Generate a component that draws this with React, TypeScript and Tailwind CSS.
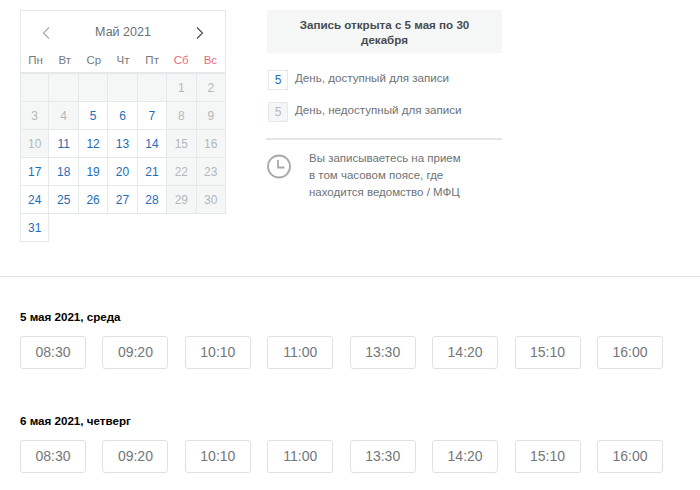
const headers = ["Пн", "Вт", "Ср", "Чт", "Пт", "Сб", "Вс"];
const times = ["08:30", "09:20", "10:10", "11:00", "13:30", "14:20", "15:10", "16:00"];
const days: (number | null)[] = [null, null, null, null, null, 1, 2];
for (let i = 3; i <= 31; i++) days.push(i);
const available = (d: number) => d >= 5 && ![8, 9, 10, 15, 16, 22, 23, 29, 30].includes(d);

function Cell({ d }: { d: number | null }) {
  const on = d !== null && available(d);
  return (
    <div
      className={`h-[28px] flex items-center justify-center border-r border-b border-[#e4e9ec] text-[12px] ${
        on ? "bg-white text-[#1f6cb8]" : "bg-[#f5f7f7] text-[#b3b8ba]"
      }`}
    >
      {d}
    </div>
  );
}

function Slots({ title }: { title: string }) {
  return (
    <section>
      <h2 className="text-[11.6px] leading-[16px] font-bold text-black">{title}</h2>
      <div className="mt-[11px] flex justify-between w-[643px]">
        {times.map((t) => (
          <div
            key={t}
            className="w-[66px] h-[33px] flex items-center justify-center rounded-[3px] border border-[#dfe1e2] bg-white text-[14px] text-[#73777a]"
          >
            {t}
          </div>
        ))}
      </div>
    </section>
  );
}

export default function App() {
  return (
    <div className="w-[700px] h-[490px] overflow-hidden bg-white font-['Liberation_Sans',Arial,sans-serif]">
      <div className="flex pt-[10px] pl-[20px]">
        <div className="w-[206px]">
          <div className="h-[64px] border border-[#e4e9ec] border-b-2 box-border">
            <div className="h-[41px] flex items-center justify-between pl-[20px] pr-[20px] pt-[2px]">
              <svg width="10" height="14" viewBox="0 0 10 14" fill="none" stroke="#a3a8ac" strokeWidth="1.1">
                <path d="M8 1.5 2.5 7 8 12.5" />
              </svg>
              <span className="text-[12.5px] text-[#6a6f73]">Май 2021</span>
              <svg width="10" height="14" viewBox="0 0 10 14" fill="none" stroke="#45494c" strokeWidth="1.1">
                <path d="M2 1.5 7.5 7 2 12.5" />
              </svg>
            </div>
            <div className="grid grid-cols-7 text-[11.5px] leading-[16px] text-center text-[#75797d]">
              {headers.map((h, i) => (
                <span key={h} className={i > 4 ? "text-[#ee6b7d]" : ""}>
                  {h}
                </span>
              ))}
            </div>
          </div>
          <div className="grid grid-cols-7 w-[206px]">
            {days.map((d, i) => (
              <div key={i} className={i % 7 === 0 ? "border-l border-[#e4e9ec]" : ""}>
                <Cell d={d} />
              </div>
            ))}
          </div>
        </div>
        <div className="ml-[41px] w-[235px]">
          <div className="h-[43px] bg-[#f5f7f7] flex items-center justify-center text-center px-[20px] text-[11.6px] leading-[15px] font-bold text-[#484c4f]">
            Запись открыта с 5 мая по 30 декабря
          </div>
          <div className="mt-[17px] flex items-start">
            <div className="ml-[1px] w-[20px] h-[20px] flex items-center justify-center border border-[#e4e9ec] text-[12px] text-[#1f6cb8]">
              5
            </div>
            <span className="ml-[7px] text-[11.6px] leading-[16px] text-[#6e7276]">День, доступный для записи</span>
          </div>
          <div className="mt-[12px] flex items-start">
            <div className="ml-[1px] w-[20px] h-[20px] flex items-center justify-center border border-[#e4e9ec] bg-[#f5f7f7] text-[12px] text-[#b3b8ba]">
              5
            </div>
            <span className="ml-[7px] text-[11.6px] leading-[16px] text-[#6e7276]">День, недоступный для записи</span>
          </div>
          <div className="mt-[16px] border-t-2 border-[#e4e7e8] -ml-[1px]" />
          <div className="mt-[6px] flex">
            <svg className="mt-[8px] shrink-0" width="24" height="25" viewBox="0 0 24 25" fill="none" stroke="#a6aaac" strokeWidth="1.8">
              <circle cx="12" cy="12.5" r="11" />
              <path d="M11 6v7.5h6.5" />
            </svg>
            <p className="ml-[18px] mt-[4px] text-[11.5px] leading-[17px] text-[#6e7276]">
              Вы записываетесь на прием
              <br />в том часовом поясе, где
              <br />находится ведомство / МФЦ
            </p>
          </div>
        </div>
      </div>
      <div className="mt-[34px] border-t border-[#dcdfe0]" />
      <div className="pl-[20px] pt-[32px]">
        <Slots title="5 мая 2021, среда" />
        <div className="mt-[44px]">
          <Slots title="6 мая 2021, четверг" />
        </div>
      </div>
    </div>
  );
}
